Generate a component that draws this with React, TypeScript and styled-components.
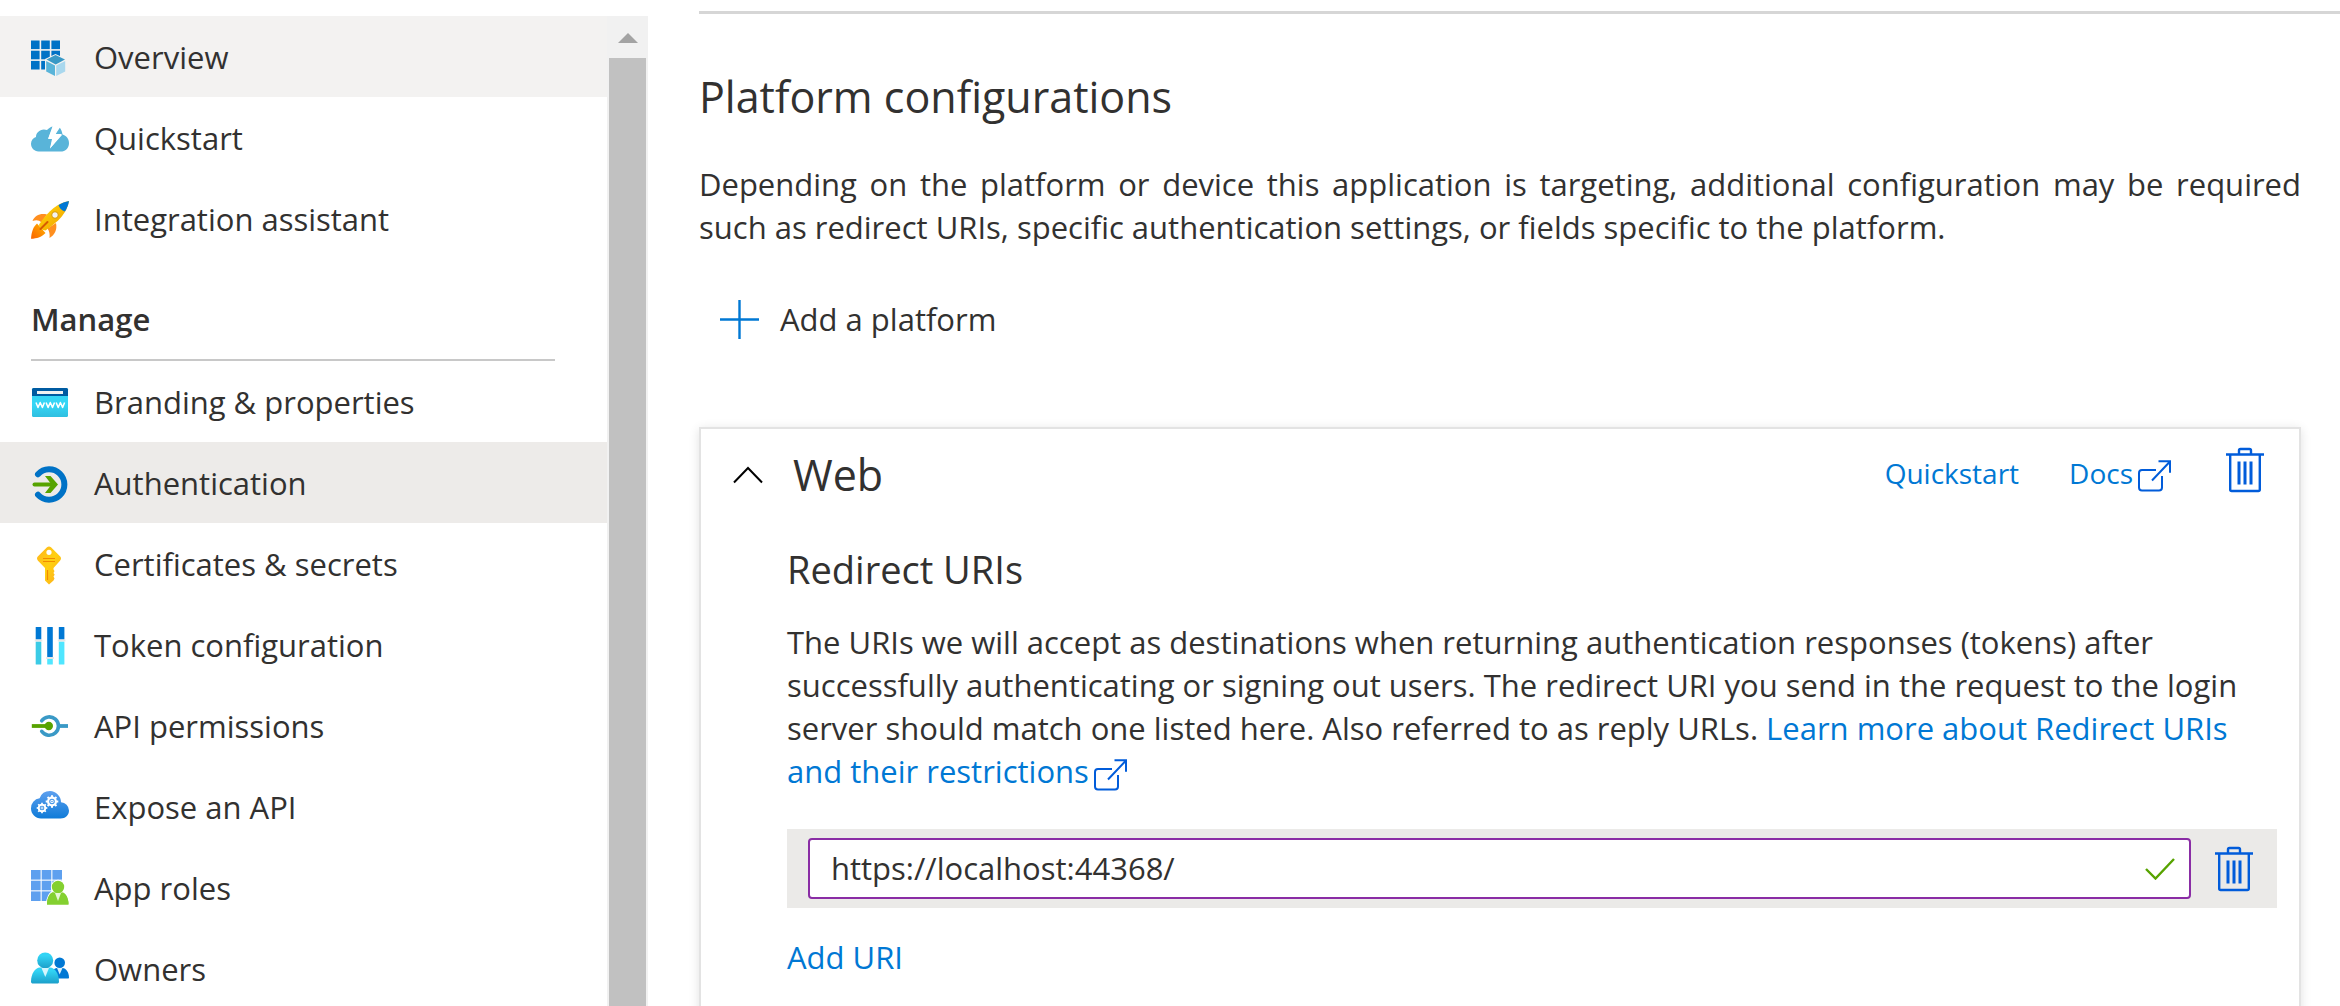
import React, { useState } from "react";
import styled, { createGlobalStyle } from "styled-components";

const ink = "#323130";
const link = "#0078d4";
const iconBlue = "#015cda";

const GlobalStyle = createGlobalStyle`
  *, *::before, *::after { box-sizing: border-box; }
  body {
    margin: 0;
    background: #fff;
    color: ${ink};
    font-family: "Open Sans", "Noto Sans", sans-serif;
    font-size: 31px;
    line-height: 43px;
  }
  h2, h3, p, ul { margin: 0; padding: 0; font-weight: 400; }
  button, input { font: inherit; color: inherit; }
`;

const Page = styled.div`
  display: flex;
  height: 100vh;
  overflow: hidden;
`;

const Sidebar = styled.div`
  display: flex;
  flex: 0 0 648px;
  margin-top: 16px;
`;

const Nav = styled.nav`
  flex: 1;
  overflow: hidden;
`;

const NavList = styled.ul`
  list-style: none;
`;

const NavLink = styled.a<{ $background?: string }>`
  display: flex;
  align-items: center;
  gap: 25px;
  height: 81px;
  padding: 2px 31px 0;
  color: inherit;
  text-decoration: none;
  white-space: nowrap;
  background: ${(p) => p.$background ?? "transparent"};
`;

const NavIcon = styled.svg`
  flex: none;
  width: 38px;
  height: 38px;
  overflow: visible;
`;

const GroupTitle = styled.h3`
  height: 102px;
  margin: 0 52px 0 31px;
  padding-top: 39px;
  border-bottom: 2px solid #c8c8c8;
  font-size: 31px;
  font-weight: 600;
`;

const Scrollbar = styled.div`
  display: flex;
  flex-direction: column;
  width: 41px;
  padding: 0 2px;
  background: #f1f1f1;
`;

const ScrollUp = styled.button`
  display: grid;
  place-items: center;
  height: 42px;
  padding: 2px 0 0;
  border: 0;
  background: none;
`;

const ScrollThumb = styled.div`
  flex: 1;
  background: #c1c1c1;
`;

const Main = styled.main`
  flex: 1;
  min-width: 0;
  padding: 11px 0 0 51px;
`;

const Divider = styled.hr`
  height: 3px;
  margin: 0;
  border: 0;
  background: #d6d6d6;
`;

const Content = styled.section`
  padding: 55px 39px 0 0;
`;

const Title = styled.h2`
  font-size: 43px;
  line-height: 56px;
`;

const Intro = styled.p`
  margin-top: 38px;
  text-align: justify;
`;

const AddPlatform = styled.button`
  display: flex;
  align-items: center;
  gap: 21px;
  height: 48px;
  margin: 46px 0 84px 21px;
  padding: 0;
  border: 0;
  background: none;
`;

const Card = styled.section`
  min-height: 700px;
  padding: 18px 22px 0 30px;
  border: 2px solid #e3e3e3;
  box-shadow: 0 2px 10px rgba(0, 0, 0, 0.12);
`;

const CardHeader = styled.header`
  display: flex;
  align-items: center;
`;

const Collapse = styled.button`
  display: grid;
  place-items: center;
  width: 34px;
  height: 40px;
  margin-right: 28px;
  padding: 0;
  border: 0;
  background: none;
`;

const HeaderActions = styled.div`
  display: flex;
  align-items: center;
  gap: 50px;
  margin-left: auto;
  padding-right: 13px;
  padding-bottom: 4px;
  font-size: 28px;
`;

const TextLink = styled.a`
  color: ${link};
  text-decoration: none;
`;

const OutIcon = styled.svg`
  width: 33px;
  height: 32px;
  margin-left: 5px;
  vertical-align: -8px;
`;

const IconButton = styled.button`
  display: grid;
  place-items: center;
  padding: 0;
  border: 0;
  background: none;
`;

const HeaderIconButton = styled(IconButton)`
  margin: 0 0 6px 5px;
`;

const CardBody = styled.div`
  padding: 41px 0 0 56px;
`;

const SubTitle = styled.h3`
  font-size: 38px;
  line-height: 50px;
`;

const Description = styled.p`
  margin: 27px 0 36px;
`;

const UriRow = styled.div`
  display: flex;
  align-items: center;
  height: 79px;
  padding: 0 24px 0 21px;
  gap: 24px;
  background: #ebeae8;
`;

const UriField = styled.label`
  display: flex;
  flex: 1;
  align-items: center;
  height: 61px;
  padding: 0 14px 0 21px;
  border: 2px solid #8a2da5;
  border-radius: 4px;
  background: #fff;
`;

const UriInput = styled.input`
  flex: 1;
  min-width: 0;
  padding: 0;
  border: 0;
  outline: 0;
  background: none;
`;

const AddUri = styled.button`
  margin-top: 28px;
  padding: 0;
  border: 0;
  background: none;
  color: ${link};
`;

const Cloud = ({ fill }: { fill: string }) => (
  <path
    transform="translate(0 2)"
    fill={fill}
    d="M38 19.5a8.6 8.6 0 0 0-8-8.3A11.3 11.3 0 0 0 19 0a11 11 0 0 0-10.4 7.3A9.8 9.8 0 0 0 0 17.5C0 23 4.5 27.500 10 27.500h19.500c5 0 8.500-3.500 8.500-8z"
  />
);

const tiles = (size: number, pitch: number, top: number, fill: string) =>
  [0, 1, 2].flatMap((r) =>
    [0, 1, 2].map((c) => (
      <rect key={`${r}${c}`} x={c * pitch} y={top + r * pitch} width={size} height={size} fill={fill} />
    ))
  );

const OverviewIcon = () => (
  <NavIcon viewBox="0 0 38 38">
    {tiles(8.6, 10.2, 1.5, "#0072c6")}
    <path fill="#f3f2f1" d="M24.500 15 35.500 20v13.500L24.500 39 14 33.500V20z" />
    <path fill="#3999c6" d="M24.500 16 34 20.500 24.700 25.500 15.500 20.500z" />
    <path fill="#59b4d9" d="M15.200 22 24 26.500V37l-8.800-4.500z" />
    <path fill="#a9d8ee" d="M34.200 22 25.200 26.500V37l9-4.500z" />
  </NavIcon>
);

const QuickstartIcon = () => (
  <NavIcon viewBox="0 0 38 38">
    <path
      fill="#59b4d9"
      d="M31.500 14.500C31 11.500 30 9 28.800 7.800L24 15h7L19 28.500l2-9.500h-4L21.500 6.500c-2 .5-4.200 2-5.500 3.500C10 7.800 4.700 12.500 5 17c-3 .8-5 3.400-5 6.800C0 28 3.300 31.500 7.500 31.500h22c5 0 8.500-3.500 8.500-8.300 0-4.400-2.800-7.700-6.500-8.700z"
    />
    <path fill="#fff" d="M22 6.500h6L24.500 14H31L19 28.500l3-10.500h-4.500z" />
  </NavIcon>
);

const RocketIcon = () => (
  <NavIcon viewBox="0 0 38 38">
    <defs>
      <linearGradient id="rocketBody" x1="0" y1="0" x2="1" y2="1">
        <stop offset="0.2" stopColor="#ffcf0a" />
        <stop offset="0.8" stopColor="#f2a900" />
      </linearGradient>
      <linearGradient id="rocketFlame" x1="1" y1="0" x2="0" y2="1">
        <stop offset="0" stopColor="#ffb400" />
        <stop offset="1" stopColor="#fa6400" />
      </linearGradient>
    </defs>
    <path fill="#ff8f1f" d="M16 13.500C9 12 4 14.500 1.500 20c4-1.500 6.500-1 9 1.500z" />
    <path fill="#ff8f1f" d="M25 22c1.500 7-1.500 12-6.500 15 .5-4-.2-7-2-9.500z" />
    <path fill="url(#rocketFlame)" d="M6 22.500C2 26 .5 31 0 37.800c6-.3 10-1.500 14.500-5.800z" />
    <path fill="url(#rocketBody)" d="M38 0C27 2 18 9 8 23.500c0 3 3.500 6 6.500 6C28 20 36 12 38 0z" />
    <path fill="#0078d4" d="M38 0c-4 .8-7.300 2-10.500 4 .7 3 3 5.300 6.500 6.500C36 7.300 37.300 4 38 0z" />
    <circle cx="24" cy="14" r="3.300" fill="#f3f2f1" stroke="#d99a00" />
    <path d="m9.500 28 7-7" stroke="#d65a00" strokeWidth="2" strokeLinecap="round" />
  </NavIcon>
);

const BrandingIcon = () => (
  <NavIcon viewBox="0 0 38 38">
    <defs>
      <linearGradient id="brandBody" x1="0" y1="0" x2="0" y2="1">
        <stop offset="0.6" stopColor="#35d5f5" />
        <stop offset="1" stopColor="#2fbfe0" />
      </linearGradient>
    </defs>
    <rect x="1" y="4" width="36" height="29" rx="1.500" fill="url(#brandBody)" />
    <path fill="#005ba1" d="M1 12V5.500Q1 4 2.500 4h33Q37 4 37 5.500V12z" />
    <rect x="6" y="7" width="26" height="3" fill="#f2f2f2" />
    <path
      fill="none"
      stroke="#fff"
      strokeWidth="1.500"
      strokeLinejoin="round"
      d="m5 18.500 2 5 2.200-5 2.200 5 2-5m1.700 0 2 5 2.200-5 2.200 5 2-5m1.700 0 2 5 2.200-5 2.200 5 2-5"
    />
  </NavIcon>
);

const AuthIcon = () => (
  <NavIcon viewBox="0 0 38 38">
    <path
      fill="none"
      stroke="#0072c6"
      strokeWidth="6"
      strokeLinecap="round"
      d="M7 9.200A15.200 15.200 0 1 1 7 29.800"
    />
    <path fill="none" stroke="#57a300" strokeWidth="4" strokeLinecap="round" d="M3.500 19.500H22" />
    <path fill="#57a300" d="M14 11h5.500l7.500 8.500-7.500 8.500H14l6.500-8.500z" />
  </NavIcon>
);

const KeyIcon = () => (
  <NavIcon viewBox="0 0 38 38">
    <defs>
      <linearGradient id="keyBody" x1="0" y1="0" x2="1" y2="1">
        <stop offset="0" stopColor="#ffb41f" />
        <stop offset="0.5" stopColor="#ffd010" />
        <stop offset="1" stopColor="#fca820" />
      </linearGradient>
    </defs>
    <path
      fill="url(#keyBody)"
      fillRule="evenodd"
      d="M16 1.200q2-1.500 4 0l9 9q2 2 0 4.500L22.500 22v1.500l1 1.500-1 2 1.200 1.800-1.200 1.700 1 2-1 2-4.500 4-4-4V22L7 14.700q-2-2.500 0-4.500zM18 3.700a2.600 2.600 0 1 0 0 5.200 2.600 2.600 0 0 0 0-5.200z"
    />
    <path fill="none" stroke="#f08c00" strokeWidth="1.200" d="M12 12.500h12M12 15.500h12M16.500 24v10" />
  </NavIcon>
);

const TokenIcon = () => (
  <NavIcon viewBox="0 0 38 38">
    {[
      [4.7, 12.5],
      [16.2, 30],
      [27.8, 12.5],
    ].map(([x, split]) => (
      <g key={x}>
        <rect x={x} y="0" width="5.600" height={split} rx="0.500" fill="#0078d4" />
        <rect x={x} y={split + 2} width="5.600" height={35.5 - split} rx="0.500" fill={x < 10 ? "#3bcbe6" : "#50e6ff"} />
        <rect x={x - 1} y={split} width="7.600" height="2" fill="#e6e6e6" />
      </g>
    ))}
  </NavIcon>
);

const ApiIcon = () => (
  <NavIcon viewBox="0 0 38 38">
    <path fill="none" stroke="#3999c6" strokeWidth="3.600" strokeLinecap="round" d="M10.700 12.800a9.200 9.200 0 1 1 0 10.500" />
    <path stroke="#3999c6" strokeWidth="3.800" d="M27 18h10" />
    <path stroke="#57a300" strokeWidth="3.800" d="M.8 18H18" />
    <circle cx="17.800" cy="18" r="4.200" fill="#57a300" />
  </NavIcon>
);

const Gear = ({ x, y, r }: { x: number; y: number; r: number }) => (
  <g stroke="#fff" fill="none">
    <circle cx={x} cy={y} r={r * 0.62} strokeWidth={r * 0.36} />
    <circle cx={x} cy={y} r={r * 0.2} strokeWidth={r * 0.16} />
    {[0, 45, 90, 135, 180, 225, 270, 315].map((a) => (
      <path
        key={a}
        transform={`rotate(${a} ${x} ${y})`}
        strokeWidth={r * 0.32}
        d={`M${x} ${y - r * 0.7}V${y - r}`}
      />
    ))}
  </g>
);

const ExposeIcon = () => (
  <NavIcon viewBox="0 0 38 38">
    <defs>
      <linearGradient id="exposeCloud" x1="0" y1="0" x2="0" y2="1">
        <stop offset="0" stopColor="#5ea0ef" />
        <stop offset="1" stopColor="#0f7bd8" />
      </linearGradient>
    </defs>
    <Cloud fill="url(#exposeCloud)" />
    <Gear x={21} y={12.5} r={6.3} />
    <Gear x={11} y={19} r={5.3} />
  </NavIcon>
);

const RolesIcon = () => (
  <NavIcon viewBox="0 0 38 38">
    {tiles(9.6, 10.7, 0, "#5ea0ef")}
    <g stroke="#fff" strokeWidth="2" paintOrder="stroke" fill="#84d030">
      <path d="M16 34.500c0-7 3-12.500 7-12.500h7c4.500 0 7.500 6 7.500 12.500z" />
      <circle cx="27" cy="17" r="6.200" />
    </g>
    <path fill="#84d030" d="M16 34.500c0-7 3-12 7-12h7c4.500 0 7.500 5.500 7.500 12z" />
    <path fill="#e8f7d8" d="M24 23h6l-3 8z" />
  </NavIcon>
);

const OwnersIcon = () => (
  <NavIcon viewBox="0 0 38 38">
    <defs>
      <linearGradient id="ownerFront" x1="0" y1="0" x2="0" y2="1">
        <stop offset="0.200" stopColor="#32d4f5" />
        <stop offset="1" stopColor="#1c9fc9" />
      </linearGradient>
    </defs>
    <circle cx="28.700" cy="11.800" r="5.300" fill="#0078d4" />
    <path fill="#0078d4" d="M20 27.500c0-6 2.500-10.500 6-10.500h5.500c3.500 0 6.500 4.500 6.500 9.500 0 .7-.4 1-1 1z" />
    <path fill="#d9effa" d="M26 17h5.500l-2.800 6.500z" />
    <g fill="url(#ownerFront)">
      <path d="M0 30.500C0 23 4 16.500 9 16.500h10c5 0 9 6.500 9 14 0 1.400-.8 2-2 2H2c-1.200 0-2-.6-2-2z" />
      <circle cx="14.200" cy="9.400" r="8" />
    </g>
    <path fill="#d4f5fc" d="M10.500 17h7.500L14.300 26z" />
  </NavIcon>
);

const OpenIcon = () => (
  <OutIcon viewBox="0 0 33 32" fill="none" stroke={iconBlue} strokeWidth="2" aria-hidden="true">
    <path d="M18 10H4q-3 0-3 3v14.500q0 3 3 3h17q3 0 3-3V16" />
    <path d="m14 20.500L32 1.500M20.500 1.200H32v11.500" />
  </OutIcon>
);

const TrashIcon = () => (
  <svg width="38" height="46" viewBox="0 0 38 46" fill="none" stroke={iconBlue} strokeWidth="2.400" aria-hidden="true">
    <path d="M0 7.500h38M13 7V3.500Q13 2 14.500 2h9Q25 2 25 3.500V7" />
    <path d="M4.200 8v34.500q0 1.500 1.500 1.500h26.600q1.500 0 1.500-1.500V8" />
    <path strokeWidth="3" d="M13 14.500v23M19 14.500v23M25 14.500v23" />
  </svg>
);

type Item = { label: string; Icon: React.ComponentType; background?: string };

const topItems: Item[] = [
  { label: "Overview", Icon: OverviewIcon, background: "#f3f2f1" },
  { label: "Quickstart", Icon: QuickstartIcon },
  { label: "Integration assistant", Icon: RocketIcon },
];

const manageItems: Item[] = [
  { label: "Branding & properties", Icon: BrandingIcon },
  { label: "Authentication", Icon: AuthIcon, background: "#edebe9" },
  { label: "Certificates & secrets", Icon: KeyIcon },
  { label: "Token configuration", Icon: TokenIcon },
  { label: "API permissions", Icon: ApiIcon },
  { label: "Expose an API", Icon: ExposeIcon },
  { label: "App roles", Icon: RolesIcon },
  { label: "Owners", Icon: OwnersIcon },
];

const NavItems = ({ items }: { items: Item[] }) => (
  <NavList>
    {items.map(({ label, Icon, background }) => (
      <li key={label}>
        <NavLink href="#" $background={background}>
          <Icon />
          {label}
        </NavLink>
      </li>
    ))}
  </NavList>
);

export default function App() {
  const [uri, setUri] = useState("https://localhost:44368/");

  return (
    <Page>
      <GlobalStyle />
      <Sidebar>
        <Nav>
          <NavItems items={topItems} />
          <GroupTitle>Manage</GroupTitle>
          <NavItems items={manageItems} />
        </Nav>
        <Scrollbar>
          <ScrollUp aria-label="Scroll up">
            <svg width="20" height="10" viewBox="0 0 20 10">
              <path fill="#a3a3a3" d="M10 0l10 10H0z" />
            </svg>
          </ScrollUp>
          <ScrollThumb />
        </Scrollbar>
      </Sidebar>

      <Main>
        <Divider />
        <Content>
          <Title>Platform configurations</Title>
          <Intro>
            Depending on the platform or device this application is targeting, additional configuration may be required
            such as redirect URIs, specific authentication settings, or fields specific to the platform.
          </Intro>
          <AddPlatform>
            <svg width="39" height="39" viewBox="0 0 39 39" stroke={link} strokeWidth="2.400" aria-hidden="true">
              <path d="M0 19.500h39M19.500 0v39" />
            </svg>
            Add a platform
          </AddPlatform>

          <Card>
            <CardHeader>
              <Collapse aria-label="Collapse Web">
                <svg width="30" height="18" viewBox="0 0 30 18" fill="none" stroke="#000" strokeWidth="2">
                  <path d="M1 16.500 15 2l14 14.500" />
                </svg>
              </Collapse>
              <Title>Web</Title>
              <HeaderActions>
                <TextLink href="#">Quickstart</TextLink>
                <TextLink href="#">
                  Docs
                  <OpenIcon />
                </TextLink>
                <HeaderIconButton aria-label="Delete Web platform">
                  <TrashIcon />
                </HeaderIconButton>
              </HeaderActions>
            </CardHeader>

            <CardBody>
              <SubTitle>Redirect URIs</SubTitle>
              <Description>
                The URIs we will accept as destinations when returning authentication responses (tokens) after
                successfully authenticating or signing out users. The redirect URI you send in the request to the login
                server should match one listed here. Also referred to as reply URLs.{" "}
                <TextLink href="#">
                  Learn more about Redirect URIs and their restrictions
                  <OpenIcon />
                </TextLink>
              </Description>
              <UriRow>
                <UriField>
                  <UriInput aria-label="Redirect URI" value={uri} onChange={(e) => setUri(e.target.value)} />
                  <svg width="30" height="22" viewBox="0 0 30 22" fill="none" stroke="#57a300" strokeWidth="2.400">
                    <path d="M1 11l9.500 9.500L29 1" />
                  </svg>
                </UriField>
                <IconButton aria-label="Delete redirect URI">
                  <TrashIcon />
                </IconButton>
              </UriRow>
              <AddUri>Add URI</AddUri>
            </CardBody>
          </Card>
        </Content>
      </Main>
    </Page>
  );
}
